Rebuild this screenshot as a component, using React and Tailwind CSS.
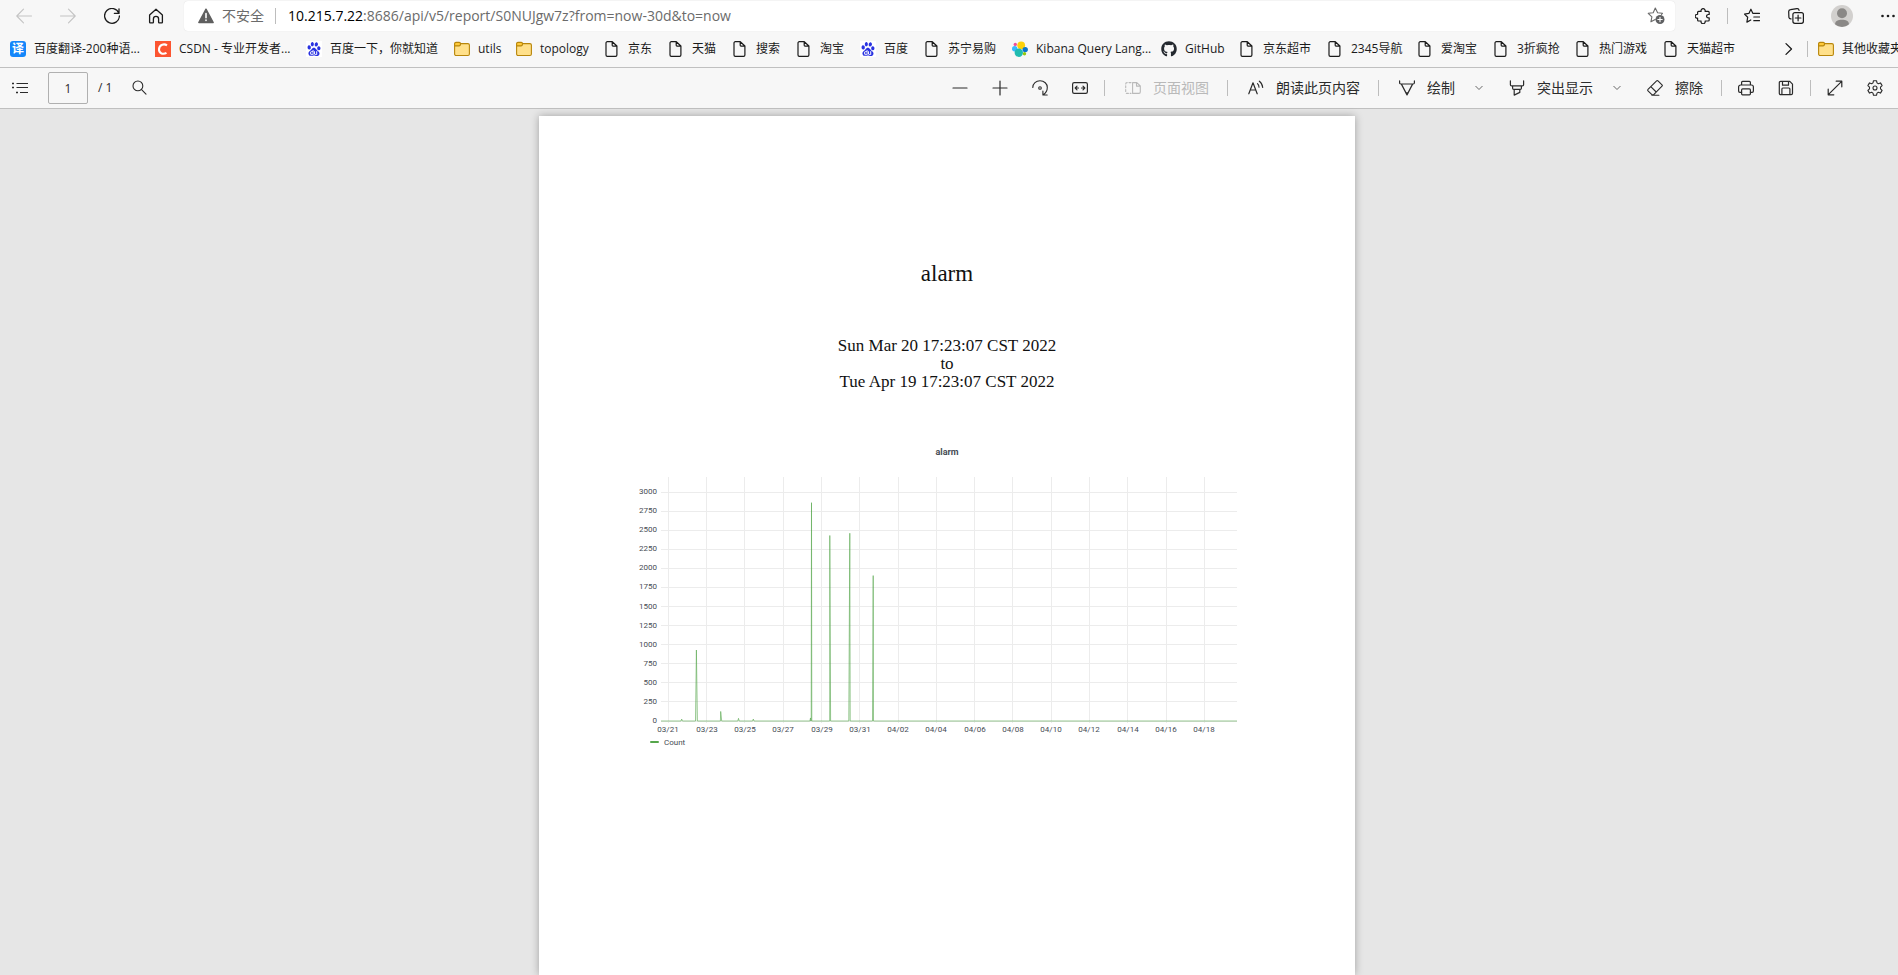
import React from "react";
import { SiBaidu } from "react-icons/si";
import { FaGithub } from "react-icons/fa";

const Svg = ({ children, size = 16, className = "" }) => (
  <svg
    width={size}
    height={size}
    viewBox={`0 0 ${size} ${size}`}
    fill="none"
    stroke="currentColor"
    strokeLinecap="round"
    strokeLinejoin="round"
    aria-hidden="true"
    className={`block shrink-0 ${className}`}
  >
    {children}
  </svg>
);

/* ---------- browser icons ---------- */
const Back = () => <Svg><path d="M15.5 8H.8M7.5 1.2.8 8l6.7 6.8" strokeWidth="1.1" /></Svg>;
const Forward = () => <Svg><path d="M.5 8h14.7M8.5 1.2 15.2 8l-6.7 6.8" strokeWidth="1.1" /></Svg>;
const Reload = () => (
  <Svg><path d="M14.9 5.2A7.4 7.4 0 1 0 15.4 8M15 .8v4.6h-4.6" strokeWidth="1.3" /></Svg>
);
const Home = () => (
  <Svg><path d="M1.6 7 8 1.2 14.4 7v7.3a.6.6 0 0 1-.6.6h-2.6a.6.6 0 0 1-.6-.6V11a2.6 2.6 0 0 0-5.2 0v3.3a.6.6 0 0 1-.6.6H2.2a.6.6 0 0 1-.6-.6z" strokeWidth="1.3" /></Svg>
);
const Warning = () => (
  <Svg>
    <path d="M8 1.2.8 14.5h14.4z" fill="#5f5f5f" stroke="#5f5f5f" strokeWidth="1.4" />
    <path d="M8 5.5v4.3M8 12v.4" stroke="#fff" strokeWidth="1.6" />
  </Svg>
);
const AddStar = () => (
  <Svg size={18}>
    <path d="M14.5 7.3 15.5 6.3l-4.9-.6L8.3 1 6.2 5.7l-5 .6 3.700 3.500-1 5 4.300-2.400" strokeWidth="1.1" />
    <circle cx="13" cy="12.5" r="4.5" fill="#5f6062" stroke="none" />
    <path d="M13 10.3v4.400M10.800 12.500h4.400" stroke="#fff" strokeWidth="1.1" />
  </Svg>
);
const Puzzle = () => (
  <Svg>
    <path d="M3.6 3.4h2.500a2.100 2.100 0 1 1 4 0h3.100a1 1 0 0 1 1 1v2.100h-.9a1.700 1.700 0 1 0 0 3.400h.9V12a1 1 0 0 1-1 1h-3.100a2.100 2.100 0 1 1-4 0H3.600a1 1 0 0 1-1-1v-1.800a2 2 0 1 1 0-3.900V4.400a1 1 0 0 1 1-1z" strokeWidth="1.2" />
  </Svg>
);
const Favorites = () => (
  <Svg>
    <path d="M8.800 5.300 6.900 1.200 4.900 5.400l-4.400.7 3.200 3.100-.8 4.900 3.900-2.100M8.800 5.300h6.700M9.800 9h5.700M9.800 12.700h5.700" strokeWidth="1.2" />
  </Svg>
);
const Collections = () => (
  <Svg>
    <path d="M3 10.900A2 2 0 0 1 .9 9.300L.7 3.700A2 2 0 0 1 2.500 1.600L8.900.7a2 2 0 0 1 2.200 1.700" strokeWidth="1.2" />
    <rect x="4.900" y="4.600" width="10.5" height="10.7" rx="2" strokeWidth="1.2" />
    <path d="M10.100 7.200v5.600M7.300 10h5.600" strokeWidth="1.2" />
  </Svg>
);
const Avatar = () => (
  <Svg size={22}>
    <circle cx="11" cy="11" r="11" fill="#d2d0ce" stroke="none" />
    <circle cx="11" cy="8.300" r="5" fill="#8a8886" stroke="none" />
    <path d="M4 19.200c.3-3.300 3-4.400 7-4.400s6.700 1.100 7 4.400A11 11 0 0 1 11 22a11 11 0 0 1-7-2.800z" fill="#8a8886" stroke="none" />
  </Svg>
);
const Dots = () => (
  <Svg>
    <g fill="#1b1b1b" stroke="none">
      <circle cx="2.5" cy="8" r="1.3" />
      <circle cx="8" cy="8" r="1.3" />
      <circle cx="13.5" cy="8" r="1.3" />
    </g>
  </Svg>
);

/* ---------- bookmark icons ---------- */
const Tile = ({ className, children }) => (
  <span aria-hidden="true" className={`flex size-4 shrink-0 items-center justify-center leading-4 text-white ${className}`}>
    {children}
  </span>
);
const Translate = () => <Tile className="rounded-[3px] bg-[#1486fa] text-xs font-bold">译</Tile>;
const Csdn = () => (
  <Svg>
    <path d="M0 0h16v16H0z" fill="#fc5531" stroke="none" />
    <path d="M12 4.300C9.500 2.600 4.400 3 4 8.200c-.3 4.700 4.500 5.300 7.500 3.600" stroke="#fff" strokeWidth="2.1" strokeLinecap="butt" />
  </Svg>
);
const Baidu = () => <SiBaidu aria-hidden="true" className="block size-4 shrink-0 bg-white p-px text-[#2932e1]" />;
const Github = () => <FaGithub aria-hidden="true" className="block size-4 shrink-0 text-[#24292f]" />;
const Folder = () => (
  <Svg>
    <rect x=".6" y="2.600" width="14.8" height="11.9" rx="1.5" fill="#ffe08a" stroke="#b8860b" strokeWidth="1.1" />
    <path d="M.6 4.900V2.800c0-.9.6-1.400 1.400-1.400h3.300c.9 0 1.200.6 1.200 1.300S6 4.900 5 4.900z" fill="#ffca3a" stroke="#b8860b" strokeWidth="1.1" />
  </Svg>
);
const Doc = () => (
  <Svg>
    <path d="M3.300.7h5L12.900 5v9a1.300 1.300 0 0 1-1.300 1.300H3.300A1.300 1.300 0 0 1 2 14V2A1.300 1.300 0 0 1 3.300.7zM8.200.8v3.500a.8.8 0 0 0 .8.8h3.800" strokeWidth="1.2" />
  </Svg>
);
const Elastic = () => (
  <Svg>
    <g stroke="none">
      <circle cx="9.200" cy="4.300" r="3.900" fill="#fed10a" />
      <circle cx="3.300" cy="3.400" r="1.700" fill="#f04e98" />
      <circle cx="2.700" cy="7.700" r="2.700" fill="#36b9ff" />
      <circle cx="6.800" cy="11.700" r="4.200" fill="#20bcb0" />
      <circle cx="13.200" cy="8.600" r="2.700" fill="#0b77cc" />
      <circle cx="12.500" cy="12.800" r="1.700" fill="#93c90e" />
    </g>
  </Svg>
);

/* ---------- PDF toolbar icons ---------- */
const List = () => (
  <Svg>
    <path d="M4.500 3.500H16M4.500 7.500H16M8 12.500h8" strokeWidth="1.2" strokeLinecap="butt" />
    <path d="M0 3.500h2M0 7.500h2M4 12.500h2" strokeWidth="1.6" strokeLinecap="butt" />
  </Svg>
);
const Search = () => <Svg><circle cx="5.900" cy="5.900" r="4.900" strokeWidth="1.1" /><path d="m9.600 9.600 4.400 4.600" strokeWidth="1.1" /></Svg>;
const Minus = () => <Svg><path d="M1 8h14" strokeWidth="1.2" /></Svg>;
const Plus = () => <Svg><path d="M1 8h14M8 1v14" strokeWidth="1.2" /></Svg>;
const Rotate = () => (
  <Svg>
    <path d="M.8 7.500C.8 3.400 4.100.8 8 .8c4.300 0 7.300 3 7.300 6.600 0 3-1.700 5.700-4.100 7.300M10.900 11v4h4.300" strokeWidth="1.1" />
    <circle cx="8" cy="8" r="1.3" strokeWidth="1.1" />
  </Svg>
);
const FitWidth = () => (
  <Svg>
    <rect x=".6" y="2.600" width="14.8" height="10.8" rx="1.6" strokeWidth="1.2" />
    <path d="M3.300 8h3.200M5 6.200 3.200 8 5 9.800M12.700 8H9.500M11 6.200 12.800 8 11 9.800" strokeWidth="1.2" />
  </Svg>
);
const PageView = () => (
  <Svg>
    <path d="M6 2.600H2A1.300 1.300 0 0 0 .7 4v8A1.300 1.300 0 0 0 2 13.400h4" strokeWidth="1.1" strokeDasharray="2 1.8" />
    <path d="M7.600 2.600h4.200l3.500 3.300v6.200a1.300 1.300 0 0 1-1.300 1.300H7.600zM11.500 2.800v3.300h3.600" strokeWidth="1.1" />
  </Svg>
);
const ReadAloud = () => (
  <Svg>
    <path d="M.8 13.800 5 2.800l4.200 11M2.300 10h5.400" strokeWidth="1.2" />
    <path d="M9.500 3.700a5 5 0 0 1 1.500 3.600M11.300 1.200a8.500 8.500 0 0 1 3.400 6.300" strokeWidth="1.1" />
  </Svg>
);
const Pen = () => (
  <Svg>
    <path d="M.6.900v1.900c0 .8.400 1.200 1.200 1.200h12.400c.8 0 1.200-.4 1.200-1.200V.9M2.400 4.100 8 14.900l5.600-10.800M6.900 12.900h2.200" strokeWidth="1.2" />
  </Svg>
);
const Highlighter = () => (
  <Svg>
    <path d="M1.400.8v3.900c0 .8.400 1.200 1.200 1.200h10.800c.8 0 1.200-.4 1.200-1.200V.8M3.600 6v2.300c0 .7.400 1.100 1.100 1.100h6.600c.7 0 1.100-.4 1.100-1.100V6M5.200 9.500v5.600l5.600-2.700V9.500" strokeWidth="1.2" />
  </Svg>
);
const Eraser = () => (
  <Svg>
    <path d="M1 9.300 9.600.9c.4-.4 1-.4 1.400 0l4 3.900c.4.400.4 1 0 1.400l-8.300 8.500H4.900L1 10.800a1 1 0 0 1 0-1.500zM3.800 6.600l5.400 5.400M4.900 15.300h7" strokeWidth="1.1" />
  </Svg>
);
const Print = () => (
  <Svg>
    <path d="M3.600 5V2.400a1 1 0 0 1 1-1h6.800a1 1 0 0 1 1 1V5M3.600 12.300H1.900A1.300 1.300 0 0 1 .6 11V7a2 2 0 0 1 2-2h10.800a2 2 0 0 1 2 2v4a1.300 1.300 0 0 1-1.300 1.300h-1.700" strokeWidth="1.2" />
    <rect x="3.600" y="8.900" width="8.800" height="5.900" rx="1" strokeWidth="1.2" />
  </Svg>
);
const Save = () => (
  <Svg>
    <path d="M2.600 1.400h9.200l2.700 2.700v9.200a1.300 1.300 0 0 1-1.300 1.300H2.600a1.300 1.300 0 0 1-1.300-1.300V2.700a1.300 1.300 0 0 1 1.300-1.300zM4.500 1.600v3.600h6V1.600M3.900 14.500V9a1 1 0 0 1 1-1h6a1 1 0 0 1 1 1v5.500" strokeWidth="1.2" />
  </Svg>
);
const Expand = () => <Svg><path d="M1.300 14.700 14.700 1.300M9.200 1.200h5.600v5.600M1.200 9.200v5.600h5.600" strokeWidth="1.2" /></Svg>;
const Gear = () => (
  <Svg>
    <path d="M6.500.7h3l.5 2.200 1.300.8 2.200-.8L15.100 5.600 13.500 7.200v1.600l1.600 1.600-1.600 2.700-2.200-.8-1.300.8-.5 2.200h-3L6 13.100l-1.300-.8-2.200.8L.9 10.400l1.600-1.600V7.200L.9 5.600l1.600-2.700 2.200.8L6 2.900z" strokeWidth="1.1" />
    <circle cx="8" cy="8" r="2" strokeWidth="1.1" />
  </Svg>
);
const ChevronDown = () => <Svg size={8}><path d="m.8 2.300 3.200 3.200 3.200-3.200" stroke="#666" /></Svg>;
const ChevronRight = () => <Svg><path d="m5 2.600 5.500 5.400L5 13.400" strokeWidth="1.3" /></Svg>;

/* ---------- building blocks ---------- */
const IconButton = ({ label, children, className = "" }) => (
  <button type="button" aria-label={label} className={`shrink-0 ${className}`}>
    {children}
  </button>
);
const TextButton = ({ icon, children, disabled }) => (
  <button type="button" disabled={disabled} className="flex shrink-0 items-center gap-3 whitespace-nowrap disabled:text-[#b9b9b9]">
    {icon}
    {children}
  </button>
);
const Divider = ({ className = "" }) => <span className={`w-px shrink-0 bg-[#bdbdbd] ${className}`} />;

/* [label, icon, label width] */
const bookmarks = [
  ["百度翻译-200种语...", Translate, "w-[105px]"],
  ["CSDN - 专业开发者...", Csdn, "w-[111px]"],
  ["百度一下，你就知道", Baidu, "w-[108px]"],
  ["utils", Folder, "w-[22px]"],
  ["topology", Folder, "w-12"],
  ["京东", Doc, "w-6"],
  ["天猫", Doc, "w-6"],
  ["搜索", Doc, "w-6"],
  ["淘宝", Doc, "w-6"],
  ["百度", Baidu, "w-6"],
  ["苏宁易购", Doc, "w-12"],
  ["Kibana Query Lang...", Elastic, "w-[109px]"],
  ["GitHub", Github, "w-[38px]"],
  ["京东超市", Doc, "w-12"],
  ["2345导航", Doc, "w-[50px]"],
  ["爱淘宝", Doc, "w-9"],
  ["3折疯抢", Doc, "w-[42px]"],
  ["热门游戏", Doc, "w-12"],
  ["天猫超市", Doc, "w-12"],
];

const Bookmark = ({ label, icon: Icon, width = "" }) => (
  <a href="#" className="flex shrink-0 items-center gap-2 whitespace-nowrap">
    <Icon />
    <span className={width}>{label}</span>
  </a>
);

function AddressRow() {
  return (
    <div className="flex h-8 items-center pl-4 pr-0.5 text-[#1b1b1b]">
      <nav className="flex shrink-0 items-center gap-7">
        <button type="button" aria-label="返回" disabled className="text-[#c4c4c4]"><Back /></button>
        <button type="button" aria-label="前进" disabled className="text-[#c4c4c4]"><Forward /></button>
        <IconButton label="刷新"><Reload /></IconButton>
        <IconButton label="主页"><Home /></IconButton>
      </nav>
      <div className="ml-5 flex h-[30px] min-w-0 flex-1 items-center rounded bg-white pl-3.5 pr-2.5 text-sm text-[#6b6b6b] shadow-[0_0_1px_rgba(0,0,0,0.15)]">
        <Warning />
        <span className="ml-2 shrink-0">不安全</span>
        <Divider className="ml-[11px] mr-3 h-4 bg-[#8c8c8c]" />
        <p className="min-w-0 flex-1 truncate text-sm">
          <span className="text-black">10.215.7.22</span>:8686/api/v5/report/S0NUJgw7z?from=now-30d&amp;to=now
        </p>
        <IconButton label="添加到收藏夹"><AddStar /></IconButton>
      </div>
      <IconButton label="扩展" className="ml-5"><Puzzle /></IconButton>
      <Divider className="mx-4 h-4" />
      <div className="flex shrink-0 items-center gap-7">
        <IconButton label="收藏夹"><Favorites /></IconButton>
        <IconButton label="集锦"><Collections /></IconButton>
      </div>
      <IconButton label="个人资料" className="mx-[27px]"><Avatar /></IconButton>
      <IconButton label="设置及其他"><Dots /></IconButton>
    </div>
  );
}

function BookmarkRow() {
  return (
    <div className="flex h-[35px] items-center overflow-hidden pb-px pl-2.5 text-xs text-[#1b1b1b]">
      <nav className="flex min-w-0 flex-1 items-center gap-4 overflow-hidden">
        {bookmarks.map(([label, icon, width]) => (
          <Bookmark key={label} label={label} icon={icon} width={width} />
        ))}
      </nav>
      <IconButton label="更多书签"><ChevronRight /></IconButton>
      <Divider className="mx-2.5 h-4" />
      <div className="w-20 shrink-0 overflow-hidden">
        <Bookmark label="其他收藏夹" icon={Folder} />
      </div>
    </div>
  );
}

function PdfToolbar() {
  return (
    <div className="flex h-[41px] items-center border-t border-[#c0c0c0] pl-3 pr-[15px] text-sm text-[#2b2b2b]">
      <IconButton label="目录"><List /></IconButton>
      <input
        aria-label="页码"
        defaultValue="1"
        className="ml-5 h-8 w-10 shrink-0 rounded-[2px] border border-[#b0b0b0] bg-transparent text-center text-xs"
      />
      <span className="ml-2.5 whitespace-nowrap text-xs">/ 1</span>
      <IconButton label="查找" className="ml-5"><Search /></IconButton>
      <div className="ml-auto flex shrink-0 items-center gap-6">
        <IconButton label="缩小"><Minus /></IconButton>
        <IconButton label="放大"><Plus /></IconButton>
        <IconButton label="旋转"><Rotate /></IconButton>
        <IconButton label="适合宽度"><FitWidth /></IconButton>
      </div>
      <Divider className="ml-4 mr-5 h-4" />
      <TextButton icon={<PageView />} disabled>页面视图</TextButton>
      <Divider className="ml-[18px] mr-5 h-4" />
      <TextButton icon={<ReadAloud />}>朗读此页内容</TextButton>
      <Divider className="ml-[18px] mr-5 h-4" />
      <TextButton icon={<Pen />}>绘制</TextButton>
      <IconButton label="绘制选项" className="ml-5 mr-[26px]"><ChevronDown /></IconButton>
      <TextButton icon={<Highlighter />}>突出显示</TextButton>
      <IconButton label="突出显示选项" className="ml-5 mr-[26px]"><ChevronDown /></IconButton>
      <TextButton icon={<Eraser />}>擦除</TextButton>
      <Divider className="ml-[18px] mr-4 h-4" />
      <div className="flex shrink-0 items-center gap-6">
        <IconButton label="打印"><Print /></IconButton>
        <IconButton label="保存"><Save /></IconButton>
      </div>
      <Divider className="mx-4 h-4" />
      <div className="flex shrink-0 items-center gap-6">
        <IconButton label="全屏"><Expand /></IconButton>
        <IconButton label="设置"><Gear /></IconButton>
      </div>
    </div>
  );
}

/* ---------- chart ---------- */
const yTicks = [0, 250, 500, 750, 1000, 1250, 1500, 1750, 2000, 2250, 2500, 2750, 3000];
const xTicks = ["03/21", "03/23", "03/25", "03/27", "03/29", "03/31", "04/02", "04/04", "04/06", "04/08", "04/10", "04/12", "04/14", "04/16", "04/18"];
const X0 = 33.4;
const DX = 38.28;
const Y0 = 252;
const yOf = (v) => Y0 - (v / 3000) * 229;

/* [x, value, left foot, right foot] */
const spikes = [
  [46.7, 25, 0.7, 0.7],
  [61.4, 930, 0.9, 1],
  [85.7, 125, 0.3, 1],
  [103.5, 35, 0.7, 0.7],
  [118.3, 25, 0.7, 0.7],
  [175.5, 40, 0.6, 0.2],
  [176.5, 2860, 0.3, 0.3],
  [194.8, 2430, 0.1, 0.8],
  [214.8, 2460, 1, 0.4],
  [238.2, 1905, 0.7, 0.3],
];

function AlarmChart() {
  let d = `M26 ${Y0}`;
  spikes.forEach(([x, v, l, r]) => {
    d += `H${x - l}L${x} ${yOf(v)}L${x + r} ${Y0}`;
  });
  d += "H602";
  return (
    <svg viewBox="0 0 624 284" role="img" aria-label="alarm" className="block w-full font-['Roboto',sans-serif] text-[8px]">
      <g stroke="#ececec" strokeWidth="1">
        {yTicks.map((v) => (
          <line key={v} x1="26" x2="602" y1={Math.floor(yOf(v)) + 0.5} y2={Math.floor(yOf(v)) + 0.5} />
        ))}
        {xTicks.map((t, i) => (
          <line key={t} x1={Math.floor(X0 + i * DX) + 0.5} x2={Math.floor(X0 + i * DX) + 0.5} y1="8" y2="254" />
        ))}
      </g>
      <path d={d} fill="#56a64b" fillOpacity="0.1" stroke="#56a64b" strokeWidth="0.6" strokeLinejoin="bevel" />
      <g fill="#464c54">
        {yTicks.map((v) => (
          <text key={v} x="22" y={Math.round(yOf(v)) + 2} textAnchor="end">{v}</text>
        ))}
        {xTicks.map((t, i) => (
          <text key={t} x={Math.round(X0 + i * DX)} y="263" textAnchor="middle">{t}</text>
        ))}
        <text x="29" y="276">Count</text>
      </g>
      <rect x="15" y="272" width="9" height="2" rx="1" fill="#56a64b" />
    </svg>
  );
}

export default function App() {
  return (
    <div className="flex min-h-screen flex-col bg-[#e6e6e6] font-['Open_Sans','Noto_Sans_CJK_SC',sans-serif]">
      <header className="shrink-0 border-b border-[#c0c0c0] bg-[#f7f7f7]">
        <AddressRow />
        <BookmarkRow />
        <PdfToolbar />
      </header>
      <main className="flex flex-1 flex-col items-center pr-1 pt-[7px]">
        <article className="flex w-full max-w-[816px] flex-1 flex-col items-center bg-white pt-[142px] text-[#111] shadow-[0_0_8px_rgba(0,0,0,0.3)]">
          <h1 className="font-['Liberation_Serif',serif] text-[23px] leading-8">alarm</h1>
          <p className="mt-[47px] text-center font-['Liberation_Serif',serif] text-[17px] leading-[18px]">
            Sun Mar 20 17:23:07 CST 2022
            <br />
            to
            <br />
            Tue Apr 19 17:23:07 CST 2022
          </p>
          <figure className="mt-[53px] w-full max-w-[624px]">
            <figcaption className="h-[25px] text-center font-['Roboto',sans-serif] text-[9px] font-bold leading-4 text-[#464c54]">
              alarm
            </figcaption>
            <AlarmChart />
          </figure>
        </article>
      </main>
    </div>
  );
}
